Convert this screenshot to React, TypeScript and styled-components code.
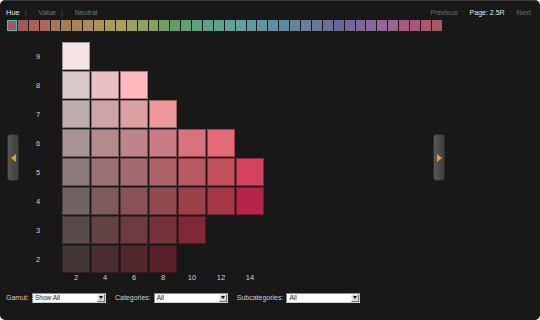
import React from 'react';
import styled, { createGlobalStyle } from 'styled-components';

const GlobalStyle = createGlobalStyle`
  html, body {
    margin: 0;
    padding: 0;
    background: #ffffff;
  }
  body {
    font-family: "Liberation Sans", Arial, sans-serif;
  }
`;

const Panel = styled.div`
  width: 540px;
  height: 320px;
  box-sizing: border-box;
  background: #181818;
  border-top: 1px solid #3c3c3c;
  border-radius: 5px;
  display: flex;
  flex-direction: column;
  overflow: hidden;
`;

const Header = styled.div`
  display: flex;
  justify-content: space-between;
  align-items: center;
  height: 9px;
  margin-top: 7px;
  padding: 0 9px 0 6px;
  font-size: 7px;
  line-height: 9px;
`;

const Tabs = styled.div`
  display: flex;
  align-items: center;
`;

const Tab = styled.span<{ $active?: boolean }>`
  color: ${(p) => (p.$active ? '#e6e6e6' : '#777777')};
  font-size: ${(p) => (p.$active ? '7.5px' : '7px')};
`;

const Sep = styled.span<{ $wide?: boolean }>`
  color: #5a5a5a;
  margin: 0 ${(p) => (p.$wide ? '12px' : '5px')} 0 5px;
`;

const Pager = styled.div`
  display: flex;
  align-items: center;
`;

const PageLink = styled.span<{ $current?: boolean }>`
  color: ${(p) => (p.$current ? '#e6e6e6' : '#6f6f6f')};
`;

const Colon = styled.span`
  color: #4a4a4a;
  margin: 0 5px;
`;

const Swatches = styled.div`
  display: flex;
  gap: 1px;
  margin: 3px 0 0 7px;
  height: 11px;
`;

const Swatch = styled.div<{ $selected?: boolean }>`
  width: 9.9px;
  height: 11px;
  box-sizing: border-box;
  border: ${(p) => (p.$selected ? '1px solid #2fc4c4' : 'none')};
`;

const Main = styled.div`
  display: flex;
  margin-top: 11px;
  padding: 0 95px 0 7px;
  height: 243px;
`;

const NavButton = styled.div`
  width: 12px;
  height: 47px;
  margin-top: 92px;
  box-sizing: border-box;
  border-radius: 3px;
  background: linear-gradient(to right, #5a5854, #4a4844 60%, #43413d);
  border: 1px solid #2a2a28;
  display: flex;
  align-items: center;
  justify-content: center;
`;

const Spacer = styled.div`
  flex: 1;
`;

const Arrow = styled.div<{ $dir: 'left' | 'right' }>`
  width: 0;
  height: 0;
  border-top: 4px solid transparent;
  border-bottom: 4px solid transparent;
  ${(p) =>
    p.$dir === 'left'
      ? 'border-right: 5px solid #f39a1f;'
      : 'border-left: 5px solid #f39a1f;'}
`;

const Chart = styled.div`
  display: grid;
  grid-template-columns: 38px 203px;
  column-gap: 5px;
  row-gap: 0;
  align-content: start;
`;

const ValueAxis = styled.div`
  display: grid;
  grid-template-rows: repeat(8, 28px);
  row-gap: 1px;
`;

const AxisLabel = styled.div`
  display: flex;
  align-items: center;
  justify-content: center;
  color: #d0d0d0;
  font-size: 7.5px;
`;

const Grid = styled.div`
  display: grid;
  grid-template-columns: repeat(7, 28px);
  grid-template-rows: repeat(8, 28px);
  gap: 1px;
`;

const Cell = styled.div<{ $col: number; $row: number }>`
  grid-column: ${(p) => p.$col};
  grid-row: ${(p) => p.$row};
  box-shadow: inset 0 0 0 1px rgba(0, 0, 0, 0.35);
`;

const ChromaAxis = styled.div`
  grid-column: 2;
  display: grid;
  grid-template-columns: repeat(7, 28px);
  column-gap: 1px;
  height: 9px;
`;

const Footer = styled.div`
  display: flex;
  align-items: center;
  margin-top: 7px;
  padding-left: 6px;
  height: 11px;
  font-size: 7px;
`;

const FilterLabel = styled.span`
  color: #cfcfcf;
  margin-right: 3px;
`;

const Select = styled.div`
  width: 74px;
  height: 10px;
  box-sizing: border-box;
  background: #ffffff;
  border: 1px solid #8a8a8a;
  border-right-color: #d0d0d0;
  border-bottom-color: #d0d0d0;
  display: flex;
  align-items: center;
  justify-content: space-between;
  margin-right: 9px;
`;

const SelectText = styled.span`
  color: #222;
  font-size: 6.5px;
  padding-left: 2px;
  line-height: 8px;
`;

const SelectButton = styled.div`
  width: 8px;
  height: 8px;
  box-sizing: border-box;
  background: #d8d6d0;
  border: 1px solid #f4f4f4;
  border-right-color: #777;
  border-bottom-color: #777;
  display: flex;
  align-items: center;
  justify-content: center;
`;

const DownTri = styled.div`
  width: 0;
  height: 0;
  border-left: 2px solid transparent;
  border-right: 2px solid transparent;
  border-top: 3px solid #111;
`;

const hues = [
  355, 0, 8, 15, 22, 28, 34, 40, 45, 50, 55, 62, 72, 85, 100, 120, 138, 150,
  160, 168, 174, 180, 185, 190, 195, 200, 205, 210, 218, 228, 240, 252, 265,
  280, 295, 310, 325, 335, 343, 350,
];

// value -> colours by chroma (2, 4, 6, ...)
const chips: Record<number, string[]> = {
  9: ['#f6e3e3'],
  8: ['#dacaca', '#eac0c3', '#fdb9bd'],
  7: ['#bfacac', '#cca5a7', '#dc9fa2', '#ec989d'],
  6: ['#a69393', '#b18b8e', '#be8489', '#ca7c84', '#d6737d', '#e26b76'],
  5: ['#8d7a7a', '#987274', '#a36a70', '#ae626a', '#b95964', '#c4505e', '#d4435f'],
  4: ['#736262', '#7d5a5d', '#885257', '#924a51', '#9c414b', '#a63746', '#b62449'],
  3: ['#5b4a4b', '#644346', '#6d3b41', '#76333b', '#7f2836'],
  2: ['#443536', '#4b2e32', '#53272e', '#5b1f2b'],
};

const values = [9, 8, 7, 6, 5, 4, 3, 2];

const swatchColor = (h: number) => {
  // blues and purples are more muted in the reference strip
  const sat = h > 200 && h < 320 ? 20 : h > 60 && h <= 200 ? 26 : 32;
  return `hsl(${h}, ${sat}%, 50%)`;
};

const Filter = ({ label, value }: { label: string; value: string }) => (
  <>
    <FilterLabel>{label}</FilterLabel>
    <Select>
      <SelectText>{value}</SelectText>
      <SelectButton>
        <DownTri />
      </SelectButton>
    </Select>
  </>
);

const App = () => {
  return (
    <>
      <GlobalStyle />
      <Panel>
        <Header>
          <Tabs>
            <Tab $active>Hue</Tab>
            <Sep $wide>|</Sep>
            <Tab>Value</Tab>
            <Sep $wide>|</Sep>
            <Tab>Neutral</Tab>
          </Tabs>
          <Pager>
            <PageLink>Previous</PageLink>
            <Colon>:</Colon>
            <PageLink $current>Page: 2.5R</PageLink>
            <Colon>:</Colon>
            <PageLink>Next</PageLink>
          </Pager>
        </Header>
        <Swatches>
          {hues.map((h, i) => (
            <Swatch
              key={i}
              $selected={i === 0}
              style={{ background: swatchColor(h) }}
            />
          ))}
        </Swatches>
        <Main>
          <NavButton>
            <Arrow $dir="left" />
          </NavButton>
          <Chart>
            <ValueAxis>
              {values.map((v) => (
                <AxisLabel key={v}>{v}</AxisLabel>
              ))}
            </ValueAxis>
            <Grid>
              {values.map((v, r) =>
                chips[v].map((c, ci) => (
                  <Cell
                    key={`${v}-${ci}`}
                    $col={ci + 1}
                    $row={r + 1}
                    style={{ background: c }}
                  />
                ))
              )}
            </Grid>
            <ChromaAxis>
              {[2, 4, 6, 8, 10, 12, 14].map((c) => (
                <AxisLabel key={c}>{c}</AxisLabel>
              ))}
            </ChromaAxis>
          </Chart>
          <Spacer />
          <NavButton>
            <Arrow $dir="right" />
          </NavButton>
        </Main>
        <Footer>
          <Filter label="Gamut:" value="Show All" />
          <Filter label="Categories:" value="All" />
          <Filter label="Subcategories:" value="All" />
        </Footer>
      </Panel>
    </>
  );
};

export default App;
